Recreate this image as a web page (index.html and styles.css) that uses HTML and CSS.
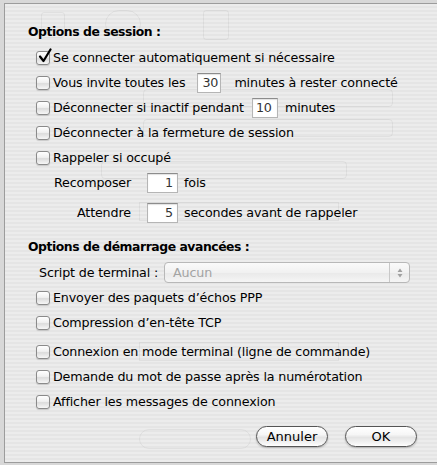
FILE: index.html
```html
<!DOCTYPE html>
<html lang="fr">
<head>
<meta charset="utf-8">
<title>Options PPP</title>
<link rel="stylesheet" href="styles.css">
</head>
<body>
<div class="window">
  <div class="sheet">
    <div class="ghost" aria-hidden="true">
      <span class="g-icon gi-1"></span>
      <span class="g-icon gi-2"></span>
      <span class="g-icon gi-3"></span>
      <span class="g-box gp-1"></span>
      <span class="g-box gp-2"></span>
      <span class="g-box g-tabs"></span>
      <span class="g-box g-field1"></span>
      <span class="g-box g-field2"></span>
      <span class="g-box g-button"></span>
    </div>
    <section class="group">
      <h2 class="heading">Options de session :</h2>
      <div class="row"><span class="cb checked"><svg viewBox="0 0 16 16" width="16" height="16"><path d="M3 8.5 L6.5 13 L13.5 1.5" fill="none" stroke="#000" stroke-width="2.2" stroke-linecap="round" stroke-linejoin="round"/></svg></span><span class="txt">Se connecter automatiquement si nécessaire</span></div>
      <div class="row"><span class="cb"></span><span class="txt">Vous invite toutes les</span><span class="field f-30">30</span><span class="txt">minutes à rester connecté</span></div>
      <div class="row"><span class="cb"></span><span class="txt">Déconnecter si inactif pendant</span><span class="field f-10">10</span><span class="txt">minutes</span></div>
      <div class="row"><span class="cb"></span><span class="txt">Déconnecter à la fermeture de session</span></div>
      <div class="row"><span class="cb"></span><span class="txt">Rappeler si occupé</span></div>
      <div class="row sub sub-redial"><span class="lbl">Recomposer</span><span class="field num">1</span><span class="txt">fois</span></div>
      <div class="row sub sub-wait"><span class="lbl">Attendre</span><span class="field num">5</span><span class="txt">secondes avant de rappeler</span></div>
    </section>
    <section class="group second">
      <h2 class="heading">Options de démarrage avancées :</h2>
      <div class="row script"><span class="lbl">Script de terminal :</span><span class="popup"><span class="popup-text">Aucun</span><span class="popup-arrows"><svg viewBox="0 0 8 12" width="8" height="12"><path d="M1.5 5 L4 1.5 L6.5 5 Z M1.5 7 L4 10.5 L6.5 7 Z" fill="#a0a0a0"/></svg></span></span></div>
      <div class="row"><span class="cb"></span><span class="txt">Envoyer des paquets d’échos PPP</span></div>
      <div class="row"><span class="cb"></span><span class="txt">Compression d’en-tête TCP</span></div>
      <div class="row gap"><span class="cb"></span><span class="txt">Connexion en mode terminal (ligne de commande)</span></div>
      <div class="row"><span class="cb"></span><span class="txt">Demande du mot de passe après la numérotation</span></div>
      <div class="row"><span class="cb"></span><span class="txt">Afficher les messages de connexion</span></div>
    </section>
    <div class="buttons">
      <button class="btn btn-cancel">Annuler</button>
      <button class="btn btn-ok">OK</button>
    </div>
  </div>
</div>
</body>
</html>
```
FILE: styles.css
```css
html, body {
  margin: 0;
  padding: 0;
}
body {
  width: 437px;
  height: 465px;
  overflow: hidden;
  background: #d8d8d8;
  font-family: "DejaVu Sans", "Liberation Sans", sans-serif;
  font-size: 12.7px;
  letter-spacing: -0.15px;
  color: #000;
}
.window {
  padding: 3px 0 0 4px;
}
.sheet {
  box-sizing: border-box;
  width: 436px;
  height: 460px;
  border: 1px solid #9c9c9c;
  background: repeating-linear-gradient(to bottom, #ececec 0, #ececec 2px, #e5e5e5 2px, #e5e5e5 4px);
  padding: 19px 0 0 23px;
  display: flex;
  flex-direction: column;
  position: relative;
  z-index: 0;
}

/* faded outlines of the window behind the sheet */
.ghost {
  position: absolute;
  inset: 0;
  z-index: -1;
  overflow: hidden;
}
.ghost > * {
  position: absolute;
  box-sizing: border-box;
  border: 1px solid rgba(0, 0, 0, 0.05);
}
.g-icon {
  border-radius: 3px;
}
.gi-1 { left: 36px; top: 8px; width: 24px; height: 26px; }
.gi-2 { left: 100px; top: 6px; width: 36px; height: 28px; border-radius: 14px; }
.gi-3 { left: 198px; top: 6px; width: 26px; height: 30px; }
.g-box {
  border-radius: 4px;
}
.gp-1 { left: 138px; top: 85px; width: 250px; height: 18px; }
.gp-2 { left: 138px; top: 115px; width: 250px; height: 18px; }
.g-tabs { left: 96px; top: 157px; width: 246px; height: 18px; }
.g-field1 { left: 134px; top: 198px; width: 200px; height: 19px; border-radius: 0; }
.g-field2 { left: 134px; top: 338px; width: 200px; height: 19px; border-radius: 0; }
.g-button { left: 134px; top: 425px; width: 112px; height: 20px; border-radius: 10px; }

.heading {
  margin: 0 0 4px 0;
  font-size: 12.4px;
  letter-spacing: -0.45px;
  font-weight: bold;
  line-height: 18px;
}
.group.second {
  margin-top: 13px;
}
.row {
  display: flex;
  align-items: center;
  height: 25px;
  padding-left: 8px;
  white-space: nowrap;
}
.row.gap {
  margin-top: 4px;
}
.cb {
  box-sizing: border-box;
  width: 14px;
  height: 14px;
  border: 1px solid #8a8a8a;
  border-radius: 3px;
  background: linear-gradient(to bottom, #ffffff 0%, #f0f0f0 45%, #dcdcdc 55%, #f6f6f6 100%);
  box-shadow: 0 1px 1px rgba(0,0,0,0.15);
  margin-right: 3px;
  position: relative;
  flex: none;
}
.cb svg {
  position: absolute;
  left: 0;
  top: -4px;
}
.field {
  box-sizing: border-box;
  height: 20px;
  line-height: 18px;
  background: #fff;
  border: 1px solid #b5b5b5;
  border-top-color: #8c8c8c;
  box-shadow: inset 0 1px 1px rgba(0,0,0,0.12);
  color: #333;
  padding: 0 4px;
}
.f-30 {
  width: 24px;
  margin: 0 13px 0 12px;
  padding-left: 4px;
}
.f-10 {
  width: 26px;
  margin: 0 7px 0 8px;
  padding-left: 3px;
}
.field.num {
  width: 31px;
  text-align: right;
  margin-right: 6px;
}
.row.sub .lbl {
  display: inline-block;
}
.sub-redial {
  padding-left: 26px;
}
.sub-redial .lbl {
  width: 93px;
}
.sub-wait {
  padding-left: 49px;
  margin-top: 5px;
}
.sub-wait .lbl {
  width: 70px;
}
.row.script {
  padding-left: 11px;
}
.row.script .lbl {
  width: 125px;
}
.popup {
  box-sizing: border-box;
  width: 246px;
  height: 21px;
  border: 1px solid #b8b8b8;
  border-radius: 4px;
  background: linear-gradient(to bottom, #fafafa 0%, #f1f1f1 50%, #e9e9e9 52%, #f5f5f5 100%);
  display: flex;
  align-items: center;
}
.popup-text {
  flex: 1;
  color: #a3a3a3;
  padding-left: 8px;
}
.popup-arrows {
  width: 19px;
  height: 100%;
  border-left: 1px solid #c8c8c8;
  display: flex;
  align-items: center;
  justify-content: center;
}
.buttons {
  display: flex;
  justify-content: flex-end;
  gap: 17px;
  margin-top: 12px;
  padding-right: 22px;
}
.btn {
  box-sizing: border-box;
  height: 21px;
  border: 1px solid #555;
  border-radius: 11px;
  background: linear-gradient(to bottom, #ffffff 0%, #f6f6f6 40%, #e4e4e4 55%, #f4f4f4 85%, #ffffff 100%);
  font-family: "DejaVu Sans", "Liberation Sans", sans-serif;
  font-size: 13px;
  color: #000;
  padding: 0;
  box-shadow: 0 1px 2px rgba(0,0,0,0.25);
}
.btn-cancel { width: 72px; }
.btn-ok { width: 72px; }
```
